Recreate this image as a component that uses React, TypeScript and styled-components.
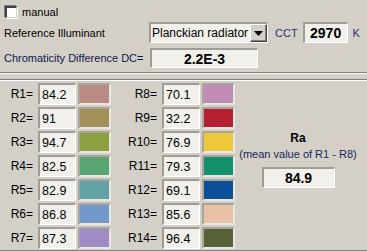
import React from "react";
import styled, { createGlobalStyle } from "styled-components";

const GlobalStyle = createGlobalStyle`
  html, body {
    margin: 0;
    padding: 0;
    background: #d4d0c8;
  }
  body {
    font-family: 'Liberation Sans', Arial, sans-serif;
    font-size: 11px;
    color: #000;
  }
`;

const Window = styled.div`
  width: 367px;
  height: 251px;
  overflow: hidden;
  background: #d4d0c8;
  display: flex;
  flex-direction: column;
`;

const TopPanel = styled.div`
  padding: 5px 0 0 0;
  height: 67px;
  border-bottom: 1px solid #808080;
  box-shadow: 0 1px 0 #ffffff;
  display: flex;
  flex-direction: column;
`;

const Row = styled.div<{ $top?: number; $height: number }>`
  display: flex;
  align-items: center;
  height: ${p => p.$height}px;
  margin-top: ${p => p.$top ?? 0}px;
`;

const CheckBox = styled.span`
  width: 9px;
  height: 9px;
  margin-left: 5px;
  background: #ffffff;
  border-top: 2px solid #404040;
  border-left: 2px solid #404040;
  border-right: 1px solid #d4d0c8;
  border-bottom: 1px solid #d4d0c8;
  box-shadow: 1px 1px 0 #ffffff, -1px -1px 0 #808080;
  display: inline-block;
`;

const Label = styled.span<{ $width?: number; $color?: string; $ml?: number }>`
  display: inline-block;
  width: ${p => (p.$width ? `${p.$width}px` : "auto")};
  margin-left: ${p => p.$ml ?? 0}px;
  color: ${p => p.$color ?? "#000"};
  white-space: nowrap;
  font-size: 11px;
`;

const Sunken = styled.div<{ $width: number; $height: number; $ml?: number; $bold?: boolean; $center?: boolean }>`
  box-sizing: border-box;
  width: ${p => p.$width}px;
  height: ${p => p.$height}px;
  margin-left: ${p => p.$ml ?? 0}px;
  background: #f1f0eb;
  border-top: 2px solid #a19d95;
  border-left: 2px solid #a19d95;
  border-right: 1px solid #ffffff;
  border-bottom: 1px solid #ffffff;
  display: flex;
  align-items: center;
  justify-content: ${p => (p.$center ? "center" : "flex-start")};
  padding-left: ${p => (p.$center ? 0 : 2)}px;
  font-size: ${p => (p.$bold ? 14 : 12.5)}px;
  font-weight: ${p => (p.$bold ? 700 : 400)};
  color: #000;
  white-space: nowrap;
`;

const SelectBox = styled.div`
  box-sizing: border-box;
  width: 119px;
  height: 21px;
  background: #f1f0eb;
  border-top: 2px solid #a19d95;
  border-left: 2px solid #a19d95;
  border-right: 1px solid #ffffff;
  border-bottom: 1px solid #ffffff;
  display: flex;
  align-items: center;
  justify-content: space-between;
  font-size: 12px;
  padding-left: 1px;
`;

const DropButton = styled.div`
  box-sizing: border-box;
  width: 17px;
  height: 18px;
  background: #d4d0c8;
  border-top: 1px solid #ffffff;
  border-left: 1px solid #ffffff;
  border-right: 1px solid #404040;
  border-bottom: 1px solid #404040;
  box-shadow: inset -1px -1px 0 #808080;
  display: flex;
  align-items: center;
  justify-content: center;
`;

const LowerPanel = styled.div`
  margin-top: 6px;
  flex: 1;
  border-top: 1px solid #808080;
  box-shadow: inset 0 1px 0 #ffffff;
  border-bottom: 1px solid #808080;
  display: flex;
  padding-top: 3px;
`;

const RowsBlock = styled.div`
  display: flex;
  flex-direction: column;
  gap: 2px;
`;

const ValueRow = styled.div`
  display: flex;
  align-items: center;
  height: 22px;
`;

const IndexLabel = styled.span<{ $width: number }>`
  width: ${p => p.$width}px;
  text-align: right;
  font-size: 12px;
  padding-right: 5px;
  box-sizing: border-box;
`;

const Swatch = styled.div<{ $color: string }>`
  box-sizing: border-box;
  width: 33px;
  height: 22px;
  margin-left: 2px;
  background: ${p => p.$color};
  border-top: 2px solid #a8a49c;
  border-left: 2px solid #a8a49c;
  border-right: 2px solid #e9e7e2;
  border-bottom: 2px solid #e9e7e2;
`;

const RaBlock = styled.div`
  width: 120px;
  margin-left: 3px;
  padding-top: 48px;
  display: flex;
  flex-direction: column;
  align-items: center;
`;

const RaTitle = styled.div`
  font-weight: 700;
  font-size: 12px;
  height: 16px;
`;

const RaSub = styled.div`
  font-size: 11px;
  color: #14285a;
  height: 16px;
  margin-top: 1px;
  white-space: nowrap;
`;

const left = [
  ["R1=", "84.2", "#ba8b82"],
  ["R2=", "91", "#a19158"],
  ["R3=", "94.7", "#8ba040"],
  ["R4=", "82.5", "#5aa672"],
  ["R5=", "82.9", "#62a3a6"],
  ["R6=", "86.8", "#7299cb"],
  ["R7=", "87.3", "#a08cc4"],
];

const right = [
  ["R8=", "70.1", "#c08cb5"],
  ["R9=", "32.2", "#b91f33"],
  ["R10=", "76.9", "#edc93a"],
  ["R11=", "79.3", "#13916a"],
  ["R12=", "69.1", "#0a4f97"],
  ["R13=", "85.6", "#e9c1a4"],
  ["R14=", "96.4", "#556236"],
];

export default function App() {
  return (
    <Window>
      <GlobalStyle />
      <TopPanel>
        <Row $height={13}>
          <CheckBox />
          <Label $ml={5}>manual</Label>
        </Row>
        <Row $top={4} $height={21}>
          <Label $width={145} $ml={4}>Reference Illuminant</Label>
          <SelectBox>
            <span>Planckian radiator</span>
            <DropButton>
              <svg width="9" height="5" viewBox="0 0 9 5">
                <polygon points="0,0 9,0 4.5,5" fill="#000" />
              </svg>
            </DropButton>
          </SelectBox>
          <Label $ml={7} $color="#1e3573">CCT</Label>
          <Sunken $width={45} $height={21} $ml={5} $bold $center>2970</Sunken>
          <Label $ml={5} $color="#1e3573">K</Label>
        </Row>
        <Row $top={5} $height={20}>
          <Label $width={146} $ml={4} $color="#10184a">Chromaticity Difference DC=</Label>
          <Sunken $width={108} $height={20} $bold $center>2.2E-3</Sunken>
        </Row>
      </TopPanel>
      <LowerPanel>
        <RowsBlock>
          {left.map(([l, v, c], i) => (
            <ValueRow key={l}>
              <IndexLabel $width={38}>{l}</IndexLabel>
              <Sunken $width={38} $height={22}>{v}</Sunken>
              <Swatch $color={c} />
              <IndexLabel $width={51}>{right[i][0]}</IndexLabel>
              <Sunken $width={38} $height={22}>{right[i][1]}</Sunken>
              <Swatch $color={right[i][2]} />
            </ValueRow>
          ))}
        </RowsBlock>
        <RaBlock>
          <RaTitle>Ra</RaTitle>
          <RaSub>(mean value of R1 - R8)</RaSub>
          <Sunken $width={73} $height={21} $bold $center style={{ marginTop: 3 }}>84.9</Sunken>
        </RaBlock>
      </LowerPanel>
    </Window>
  );
}
